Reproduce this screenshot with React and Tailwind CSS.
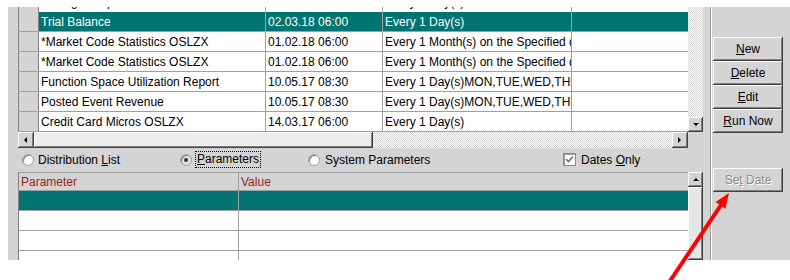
import React from 'react'

const FONT = "font-['Liberation_Sans',Arial,sans-serif] text-[12px]"
const DITHER = 'bg-[repeating-conic-gradient(#d4d4d4_0%_25%,#ffffff_0%_50%)] bg-[length:2px_2px]'
const RAISED = 'bg-[#d4d4d4] shadow-[inset_-1px_-1px_#404040,inset_1px_1px_#ffffff,inset_-2px_-2px_#808080]'

const rows = [
    { name: 'Trial Balance', date: '02.03.18 06:00', freq: 'Every 1 Day(s)', selected: true },
    { name: '*Market Code Statistics OSLZX', date: '01.02.18 06:00', freq: 'Every 1 Month(s) on the Specified day' },
    { name: '*Market Code Statistics OSLZX', date: '01.02.18 06:00', freq: 'Every 1 Month(s) on the Specified day' },
    { name: 'Function Space Utilization Report', date: '10.05.17 08:30', freq: 'Every 1 Day(s)MON,TUE,WED,THU,FRI' },
    { name: 'Posted Event Revenue', date: '10.05.17 08:30', freq: 'Every 1 Day(s)MON,TUE,WED,THU,FRI' },
    { name: 'Credit Card Micros OSLZX', date: '14.03.17 06:00', freq: 'Every 1 Day(s)' },
]

// little black triangle for the scroll buttons
const Arrow = ({ dir }) => {
    const pts = {
        up: '1,5 4,2 7,5',
        down: '1,2 4,5 7,2',
        left: '5,1 2,4 5,7',
        right: '2,1 5,4 2,7',
    }[dir]
    return (
        <svg width="8" height="8" viewBox="0 0 8 8">
            <polygon points={pts} fill="#000" />
        </svg>
    )
}

const ScrollBtn = ({ dir, className = '' }) => (
    <div className={`flex items-center justify-center shrink-0 ${RAISED} ${className}`}>
        <Arrow dir={dir} />
    </div>
)

const GridRow = ({ row }) => {
    const sel = row.selected
    const cell = `h-full flex items-center pl-[2px] overflow-hidden whitespace-nowrap border-r border-[#a0a0a0] ${sel ? 'bg-[#017471] text-white' : 'bg-white text-black'}`
    return (
        <div className="flex h-[20px] shrink-0 border-b border-[#a0a0a0]">
            <div className="w-[21px] h-full bg-[#d4d4d4] border-l border-r border-[#808080] shrink-0" />
            <div className={`${cell} w-[227px]`}>{row.name}</div>
            <div className={`${cell} w-[117px]`}>{row.date}</div>
            <div className={`${cell} w-[189px]`}>{row.freq}</div>
            <div className={`${cell} w-[116px] border-r-0`} />
        </div>
    )
}

const WinButton = ({ children, disabled, className = '' }) => (
    <div className={`w-[70px] h-[24px] shrink-0 flex items-center justify-center ${RAISED} ${disabled ? 'text-[#8c8c8c] [text-shadow:1px_1px_0_#ffffff]' : 'text-black'} ${className}`}>
        {children}
    </div>
)

const Radio = ({ checked }) => (
    <div className={`w-[12px] h-[12px] rounded-full border border-[#a0a0a0] shadow-[inset_1px_1px_#808080] flex items-center justify-center shrink-0 ${checked ? 'bg-[#e2e2e2]' : 'bg-white'}`}>
        {checked && <div className="w-[4px] h-[4px] rounded-full bg-[#333333]" />}
    </div>
)

export default function App() {
    return (
        <div className={`relative w-[790px] h-[280px] bg-white overflow-hidden ${FONT}`}>
            <div className="ml-[8px] mt-[7px] w-[782px] h-[253px] bg-[#d4d4d4] flex overflow-hidden">

                {/* Left: schedules grid + parameters */}
                <div className="w-[702px] pl-[10px] flex flex-col">

                    {/* Top grid */}
                    <div className="flex h-[125px] shrink-0">
                        <div className="w-[670px] flex flex-col">
                            {/* cut-off row above */}
                            <div className="h-[5px] shrink-0 overflow-hidden">
                                <div className="-mt-[15px] flex h-[20px]">
                                    <div className="w-[21px] h-full bg-[#d4d4d4] border-l border-r border-[#808080] shrink-0" />
                                    <div className="w-[227px] h-full bg-white border-r border-[#a0a0a0] pl-[2px] flex items-center">Manager Report</div>
                                    <div className="w-[117px] h-full bg-white border-r border-[#a0a0a0]" />
                                    <div className="w-[189px] h-full bg-white border-r border-[#a0a0a0] pl-[2px] flex items-center">Every 1 Day(s)</div>
                                    <div className="w-[116px] h-full bg-white" />
                                </div>
                            </div>
                            {rows.map((r, i) => <GridRow key={i} row={r} />)}
                        </div>
                        <div className={`w-[15px] flex flex-col justify-end ${DITHER}`}>
                            <ScrollBtn dir="down" className="h-[15px]" />
                        </div>
                    </div>

                    {/* Horizontal scrollbar */}
                    <div className="flex h-[16px] shrink-0">
                        <div className="w-[670px] flex">
                            <ScrollBtn dir="left" className="w-[16px]" />
                            <div className={`w-[339px] ${RAISED} bg-[#ececec]`} />
                            <div className={`flex-1 ${DITHER}`} />
                            <ScrollBtn dir="right" className="w-[16px]" />
                        </div>
                    </div>

                    {/* Radio options */}
                    <div className="flex items-center h-[23px] shrink-0 pl-[4px]">
                        <div className="w-[158px] flex items-center gap-[4px]">
                            <Radio />
                            <span>Distribution <span className="underline">L</span>ist</span>
                        </div>
                        <div className="w-[128px] flex items-center gap-[3px]">
                            <Radio checked />
                            <span className="border border-dotted border-black px-[1px] leading-[15px]"><span className="underline">P</span>arameters</span>
                        </div>
                        <div className="w-[255px] flex items-center gap-[5px]">
                            <Radio />
                            <span>System Parameters</span>
                        </div>
                        <div className="flex items-center gap-[5px]">
                            <div className="w-[13px] h-[13px] bg-white border border-[#8a8a8a] shadow-[inset_1px_1px_#a0a0a0] flex items-center justify-center">
                                <svg width="9" height="9" viewBox="0 0 9 9">
                                    <polyline points="1,4 3.5,6.5 8,1.5" fill="none" stroke="#707070" strokeWidth="1.6" />
                                </svg>
                            </div>
                            <span>Dates <span className="underline">O</span>nly</span>
                        </div>
                    </div>

                    {/* Parameter grid */}
                    <div className="flex flex-1 min-h-0 overflow-hidden pt-[1px]">
                        <div className="w-[670px] flex flex-col border-l border-[#808080]">
                            <div className="flex h-[19px] shrink-0 border-t border-b border-[#a0a0a0] text-[#9b1c1c]">
                                <div className="w-[220px] pl-[2px] flex items-center border-r border-[#a0a0a0]">Parameter</div>
                                <div className="flex-1 pl-[2px] flex items-center">Value</div>
                            </div>
                            <div className="flex h-[20px] shrink-0 bg-[#017471] border-b border-[#a0a0a0]">
                                <div className="w-[220px] border-r border-[#a0a0a0]" />
                            </div>
                            {[0, 1, 2].map((i) => (
                                <div key={i} className="flex h-[20px] shrink-0 bg-white border-b border-[#a0a0a0]">
                                    <div className="w-[220px] border-r border-[#a0a0a0]" />
                                </div>
                            ))}
                        </div>
                        <div className="w-[15px] flex flex-col">
                            <ScrollBtn dir="up" className="h-[15px]" />
                            <div className={`flex-1 ${RAISED} bg-[#e6e6e6]`} />
                        </div>
                    </div>
                </div>

                {/* separator */}
                <div className="w-[2px] border-l border-[#9a9a9a] border-r border-r-white" />

                {/* Right: buttons */}
                <div className="flex-1 pl-[1px] pt-[30px] flex flex-col">
                    <WinButton><span><span className="underline">N</span>ew</span></WinButton>
                    <WinButton><span><span className="underline">D</span>elete</span></WinButton>
                    <WinButton><span><span className="underline">E</span>dit</span></WinButton>
                    <WinButton><span><span className="underline">R</span>un Now</span></WinButton>
                    <WinButton disabled className="mt-[35px]"><span>Se<span className="underline">t</span> Date</span></WinButton>
                </div>
            </div>

            {/* red annotation arrow */}
            <svg className="absolute left-0 top-0 pointer-events-none" width="790" height="280" viewBox="0 0 790 280">
                <line x1="668" y1="284" x2="721" y2="205" stroke="#ff0000" strokeWidth="4" />
                <polygon points="729,193 715.6,201.9 725.4,208.7" fill="#ff0000" />
            </svg>
        </div>
    )
}
